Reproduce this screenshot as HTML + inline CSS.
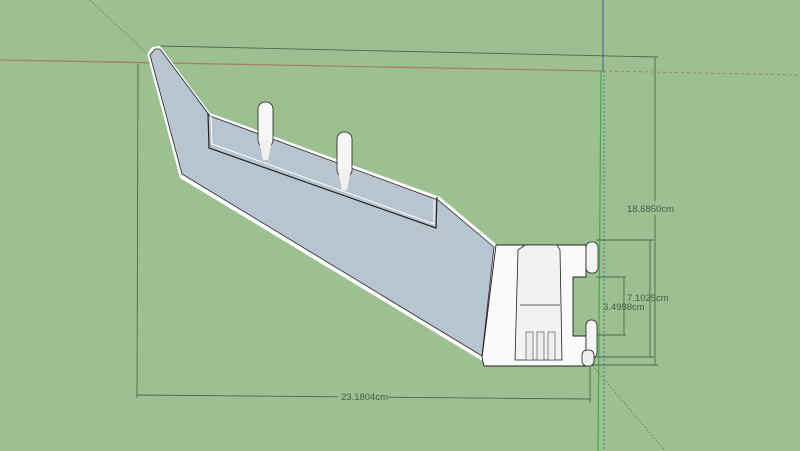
<!DOCTYPE html>
<html><head><style>
html,body{margin:0;padding:0;background:#9cc08f;}
svg{display:block}
text{font-family:"Liberation Sans",sans-serif;font-size:9.5px;fill:#4a5a48}
</style></head><body>
<svg width="800" height="451" viewBox="0 0 800 451">
<rect width="800" height="451" fill="#9cc08f"/>
<!-- axes -->
<line x1="0" y1="60" x2="603" y2="71" stroke="#a8805e" stroke-width="1.3"/>
<line x1="603" y1="71" x2="800" y2="75" stroke="#a8805e" stroke-width="1" stroke-dasharray="3,3"/>
<line x1="603" y1="0" x2="603" y2="71" stroke="#5570a0" stroke-width="1.3"/>
<line x1="604" y1="71" x2="604" y2="451" stroke="#5570a0" stroke-width="1" stroke-dasharray="2,2"/>
<line x1="601" y1="71" x2="598" y2="451" stroke="#3fae4a" stroke-width="1.2"/>
<line x1="90" y1="0" x2="210" y2="113" stroke="#5a7a5a" stroke-width="0.8" stroke-dasharray="1.5,2"/>
<line x1="588" y1="360" x2="665" y2="451" stroke="#5a7a5a" stroke-width="0.8" stroke-dasharray="1.5,2"/>
<!-- dimension lines -->
<g stroke="#4d6a4a" stroke-width="0.9" fill="none">
<line x1="160" y1="46" x2="658" y2="57"/>
<line x1="655" y1="57" x2="655" y2="365"/>
<line x1="138" y1="64" x2="137" y2="398"/>
<line x1="137" y1="395" x2="591" y2="399"/>
<line x1="590" y1="366" x2="590" y2="402"/>
<line x1="596" y1="240" x2="654" y2="240"/>
<line x1="650" y1="240" x2="650" y2="358"/>
<line x1="596" y1="277" x2="626" y2="277"/>
<line x1="624" y1="277" x2="624" y2="335"/>
<line x1="596" y1="335" x2="626" y2="335"/>
<line x1="592" y1="357" x2="654" y2="357"/>
<line x1="592" y1="365" x2="658" y2="365"/>
</g>
<rect x="620" y="201" width="52" height="14" fill="#9cc08f"/>
<text x="627" y="212">18.6850cm</text>
<text x="627" y="301">7.1025cm</text>
<text x="603" y="310">3.4998cm</text>
<rect x="338" y="390" width="50" height="12" fill="#9cc08f"/>
<text x="341" y="400">23.1804cm</text>
<!-- blade -->
<polygon points="147,54 152,47 160,46 210,113 440,197 497,245 484,362 180,178" fill="#fff"/>
<polygon points="150,55 155,49 160,49 210,116 438,200 494,247 482,356 182,174" fill="#b6c5d0" stroke="#222" stroke-width="0.8"/>
<!-- white block -->
<polygon points="496,245 586,245 586,277 573,277 573,336 586,336 586,366 484,366 482,358" fill="#fafafa" stroke="#222" stroke-width="0.9"/>
<polygon points="525,245 557,245 560,250 562,360 515,360 518,250" fill="#f2f2f2" stroke="#222" stroke-width="0.8"/>
<line x1="520" y1="305" x2="560" y2="305" stroke="#333" stroke-width="0.7"/>
<rect x="526" y="332" width="7" height="28" fill="#eee" stroke="#444" stroke-width="0.6"/>
<rect x="537" y="332" width="7" height="28" fill="#eee" stroke="#444" stroke-width="0.6"/>
<rect x="548" y="332" width="7" height="28" fill="#eee" stroke="#444" stroke-width="0.6"/>
<!-- side cylinders -->
<rect x="586" y="242" width="12" height="31" rx="5" fill="#f4f4f4" stroke="#222" stroke-width="0.8"/>
<rect x="586" y="320" width="11" height="38" rx="5" fill="#f4f4f4" stroke="#222" stroke-width="0.8"/>
<rect x="582" y="350" width="12" height="16" rx="5" fill="#eee" stroke="#222" stroke-width="0.8"/>
<!-- inner wall -->
<polyline points="208,113 209,148 436,228 437,197" fill="none" stroke="#222" stroke-width="1.2"/>
<polyline points="211,115 212,144 434,224 434,199" fill="none" stroke="#fff" stroke-width="1"/>
<!-- pegs -->
<rect x="258" y="102" width="15" height="45" rx="7" fill="#f6f6f6" stroke="#222" stroke-width="0.8"/>
<polygon points="259,140 272,140 268,160 263,160" fill="#f0f0f0"/>
<rect x="337" y="132" width="15" height="45" rx="7" fill="#f6f6f6" stroke="#222" stroke-width="0.8"/>
<polygon points="338,170 351,170 347,190 342,190" fill="#f0f0f0"/>
</svg>
</body></html>
